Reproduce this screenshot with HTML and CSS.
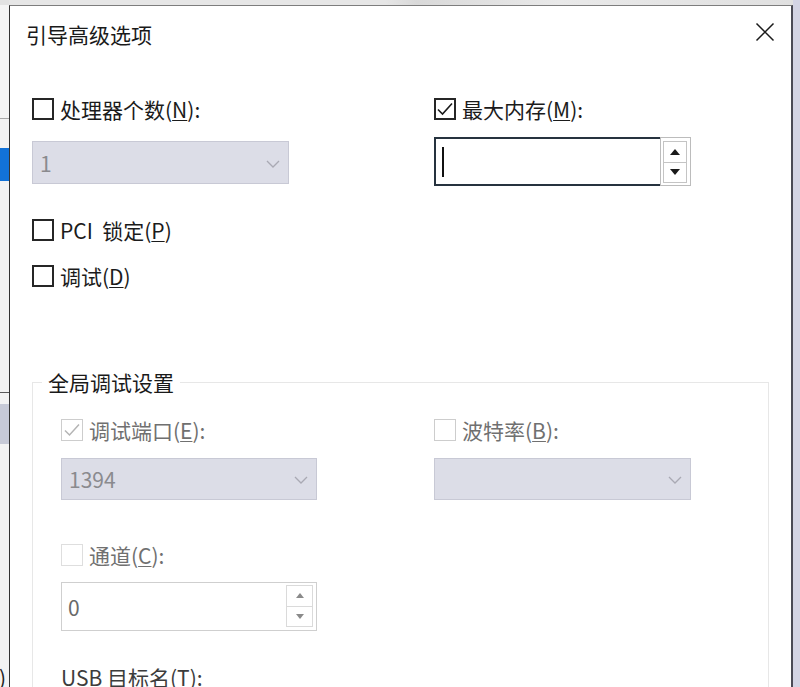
FILE: index.html
```html
<!DOCTYPE html>
<html lang="zh-CN">
<head>
<meta charset="utf-8">
<title>引导高级选项</title>
<link rel="stylesheet" href="styles.css">
</head>
<body>
<div class="screen">
  <div class="bgleft">
    <div class="bg-a"></div>
    <div class="bg-line"></div>
    <div class="bg-b"></div>
    <div class="bg-sel"></div>
    <div class="bg-c"></div>
    <div class="bg-line dark"></div>
    <div class="bg-d"></div>
    <div class="bg-btn"></div>
    <div class="bg-rest"><span class="bg-txt">)</span></div>
  </div>
  <div class="dialog-wrap">
    <div class="topband"></div>
    <div class="dialog">
      <div class="titlebar">
        <span class="title">引导高级选项</span>
        <span class="close">
          <svg width="20" height="20" viewBox="0 0 20 20"><path d="M1.5 1.5 L18.5 18.5 M18.5 1.5 L1.5 18.5" stroke="#1a1a1a" stroke-width="1.5" fill="none"/></svg>
        </span>
      </div>
      <div class="content">
        <div class="grid-top">
          <label class="chk"><span class="box"></span><span>处理器个数(<u>N</u>):</span></label>
          <label class="chk"><span class="box"><svg width="22" height="22" viewBox="0 0 22 22"><path d="M4 11.5 L8.5 16 L18 5.5" stroke="#1a1a1a" stroke-width="1.6" fill="none"/></svg></span><span>最大内存(<u>M</u>):</span></label>
          <div class="combo c-top"><span class="cval">1</span><svg class="chev" width="14" height="8" viewBox="0 0 14 8"><path d="M1 1 L7 7 L13 1" stroke="#a9a9b3" stroke-width="1.3" fill="none"/></svg></div>
          <div class="spin focus">
            <div class="field"><span class="caret"></span></div>
            <div class="updown">
              <div class="ud"><svg width="10" height="6" viewBox="0 0 10 6"><path d="M0 6 L5 0 L10 6 Z" fill="#1a1a1a"/></svg></div>
              <div class="ud"><svg width="10" height="6" viewBox="0 0 10 6"><path d="M0 0 L5 6 L10 0 Z" fill="#1a1a1a"/></svg></div>
            </div>
          </div>
        </div>
        <label class="chk row-pci"><span class="box"></span><span>PCI&nbsp; 锁定(<u>P</u>)</span></label>
        <label class="chk row-dbg"><span class="box"></span><span>调试(<u>D</u>)</span></label>

        <fieldset class="group">
          <legend>全局调试设置</legend>
          <div class="grid-in">
            <label class="chk dis"><span class="box"><svg width="22" height="22" viewBox="0 0 22 22"><path d="M4 11.5 L8.5 16 L18 5.5" stroke="#b4b4b4" stroke-width="1.5" fill="none"/></svg></span><span>调试端口(<u>E</u>):</span></label>
            <label class="chk dis"><span class="box"></span><span>波特率(<u>B</u>):</span></label>
            <div class="combo"><span class="cval">1394</span><svg class="chev" width="14" height="8" viewBox="0 0 14 8"><path d="M1 1 L7 7 L13 1" stroke="#a9a9b3" stroke-width="1.3" fill="none"/></svg></div>
            <div class="combo"><span class="cval"></span><svg class="chev" width="14" height="8" viewBox="0 0 14 8"><path d="M1 1 L7 7 L13 1" stroke="#a9a9b3" stroke-width="1.3" fill="none"/></svg></div>
          </div>
          <label class="chk dis row-chan"><span class="box light"></span><span>通道(<u>C</u>):</span></label>
          <div class="spin dspin">
            <div class="field"><span class="sval">0</span></div>
            <div class="updown">
              <div class="ud"><svg width="8" height="5" viewBox="0 0 10 6"><path d="M0 6 L5 0 L10 6 Z" fill="#8a8a8a"/></svg></div>
              <div class="ud"><svg width="8" height="5" viewBox="0 0 10 6"><path d="M0 0 L5 6 L10 0 Z" fill="#8a8a8a"/></svg></div>
            </div>
          </div>
          <div class="usb">USB 目标名(<u>T</u>):</div>
        </fieldset>
      </div>
    </div>
  </div>
  <div class="bgright"></div>
</div>
</body>
</html>
```

FILE: styles.css
```css
html, body {
  margin: 0;
  padding: 0;
}
body {
  width: 800px;
  height: 687px;
  overflow: hidden;
  background: #d3d4e4;
  font-family: "Noto Sans CJK SC", "Noto Sans", sans-serif;
  color: #1b1b1b;
}
.screen {
  display: flex;
  height: 687px;
  overflow: hidden;
}

/* background window fragment on the left */
.bgleft {
  width: 9px;
  flex: none;
  display: flex;
  flex-direction: column;
  background: #f3f3f3;
  overflow: hidden;
}
.bg-a { height: 118px; flex: none; background: linear-gradient(#e2e2e2 0 5px, #f4f4f4 5px); }
.bg-line { height: 1px; flex: none; background: #a8a8a8; }
.bg-line.dark { background: #5a5a5a; }
.bg-b { height: 29px; flex: none; }
.bg-sel { height: 33px; flex: none; background: #1272d8; }
.bg-c { height: 211px; flex: none; }
.bg-d { height: 11px; flex: none; }
.bg-btn { height: 40px; flex: none; background: #c7cad7; }
.bg-rest {
  flex: 1;
  display: flex;
  align-items: flex-end;
  overflow: hidden;
}
.bg-txt {
  font-size: 21px;
  line-height: 20px;
  color: #222;
  margin-left: -1px;
}

.bgright {
  width: 7px;
  flex: none;
  background: #d3d4e4;
}

.dialog-wrap {
  flex: 1;
  display: flex;
  flex-direction: column;
  overflow: hidden;
}
.topband {
  height: 5px;
  flex: none;
  background: linear-gradient(90deg, #e6e6e6 0, #e6e6e6 48%, #d9d9d9 52%, #e9e9e9 70%, #e0e0e0 100%);
}
.dialog {
  flex: 1;
  background: #fff;
  border-top: 1px solid #7d7d7d;
  border-left: 1px solid #333;
  border-right: 2px solid #4b4b56;
  overflow: hidden;
}

.titlebar {
  height: 56px;
  display: flex;
  align-items: center;
  justify-content: space-between;
  padding-left: 16px;
}
.title {
  font-size: 21px;
  line-height: 24px;
  color: #1a1a1a;
}
.close {
  width: 36px;
  height: 36px;
  display: flex;
  align-items: center;
  justify-content: center;
  margin-right: 8px;
  margin-bottom: 4px;
}

.content {
  padding-left: 22px;
  padding-top: 35px;
}

u {
  text-decoration-thickness: 1px;
  text-underline-offset: 2px;
}

.chk {
  display: flex;
  align-items: center;
  height: 24px;
  font-size: 21px;
  line-height: 24px;
  white-space: nowrap;
}
.box {
  width: 22px;
  height: 22px;
  box-sizing: border-box;
  border: 2px solid #262626;
  margin-right: 6px;
  flex: none;
  display: flex;
  align-items: center;
  justify-content: center;
}
.box svg { flex: none; margin: -2px; }
.chk.dis { color: #707070; }
.chk.dis .box { border: 1.5px solid #cdcdcd; }
.chk.dis .box.light { border-color: #dedede; }

.grid-top {
  display: grid;
  grid-template-columns: 257px 257px;
  column-gap: 145px;
  row-gap: 16px;
  align-items: start;
}

.combo {
  height: 43px;
  box-sizing: border-box;
  background: #dcdde7;
  border: 1px solid #c8c9d5;
  display: flex;
  align-items: center;
  justify-content: space-between;
  padding: 0 8px 0 7px;
  font-size: 21px;
  color: #8a8a8e;
}
.combo.c-top { margin-top: 4px; height: 43px; }
.cval { line-height: 24px; }
.chev { flex: none; margin-top: 2px; }

.spin {
  height: 49px;
  box-sizing: border-box;
  display: flex;
}
.spin .field {
  flex: 1;
  display: flex;
  align-items: center;
}
.spin.focus .field {
  border: 2px solid #26333f;
  border-right: none;
  padding-left: 6px;
}
.caret {
  width: 2px;
  height: 30px;
  background: #111;
}
.updown {
  width: 31px;
  box-sizing: border-box;
  display: flex;
  flex-direction: column;
  padding: 3px 3px 2px 2px;
  border: 1px solid #bcbcbc;
}
.ud {
  flex: 1;
  display: flex;
  align-items: center;
  justify-content: center;
  border: 1px solid #c4c4c4;
}
.ud + .ud { border-top: none; }

.row-pci { margin-top: 32px; }
.row-dbg { margin-top: 22px; }

.group {
  margin: 82px 0 0 0;
  width: 737px;
  box-sizing: border-box;
  border: 1px solid #e7e7e7;
  padding: 0 0 20px 28px;
}
.group legend {
  margin-left: -19px;
  padding: 0 6px;
  font-size: 21px;
  line-height: 24px;
  color: #1a1a1a;
}

.grid-in {
  display: grid;
  grid-template-columns: 256px 257px;
  column-gap: 117px;
  row-gap: 16px;
  margin-top: 24px;
}
.grid-in .combo { height: 42px; }

.row-chan { margin-top: 43px; }

.dspin {
  width: 256px;
  margin-top: 15px;
  border: 1px solid #cfcfcf;
}
.dspin .field {
  padding-left: 6px;
}
.sval {
  font-size: 21px;
  line-height: 24px;
  color: #6a6a6a;
}
.dspin .updown {
  border: none;
  width: 30px;
  padding: 2px 3px 3px 0;
}
.dspin .ud { border-color: #dadada; }

.usb {
  margin-top: 36px;
  font-size: 21px;
  line-height: 20px;
  color: #3c3c3c;
}
```
